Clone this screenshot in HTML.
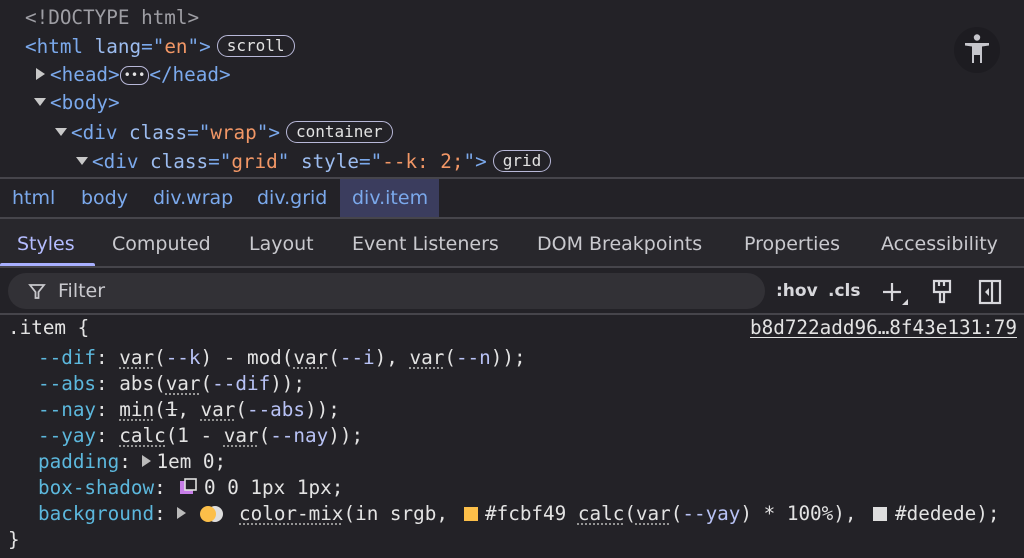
<!DOCTYPE html>
<html><head><style>
*{margin:0;padding:0;box-sizing:border-box}
body{width:1024px;height:558px;background:#232227;overflow:hidden;position:relative;font-family:"DejaVu Sans Mono","Liberation Mono",monospace;font-size:19.3px;color:#e3e3e3}
.a{position:absolute;white-space:pre;line-height:24px}
.t{color:#7ba9ec}.an{color:#9cbcef}.av{color:#f29766}.g{color:#9e9ea4}
.badge{display:inline-block;border:1.5px solid #b8b8d8;border-radius:12px;font-size:16px;line-height:20px;padding:0 9px;color:#e3e3e3;vertical-align:2px}
.ui{font-family:"DejaVu Sans","Liberation Sans",sans-serif;font-size:19px;color:#c9c9ce}
.bc{color:#7ba9ec}
.p{color:#5cb8dd}.u{text-decoration:underline dotted #999;text-underline-offset:4px}
.vr{color:#b8c2f5}
.tri{display:inline-block;width:0;height:0;border-left:9px solid #c8c8c8;border-top:6px solid transparent;border-bottom:6px solid transparent;vertical-align:1px;margin-right:5px}
.trd{display:inline-block;width:0;height:0;border-top:8px solid #c8c8c8;border-left:6px solid transparent;border-right:6px solid transparent;vertical-align:3px;margin-right:4px}
.hr{position:absolute;left:0;width:1024px;height:2px;background:#46454b}
</style></head><body>
<div class="a g" style="left:25px;top:6px">&lt;!DOCTYPE html&gt;</div>
<div class="a" style="left:25px;top:35px"><span class="t">&lt;html </span><span class="an">lang</span><span class="t">="</span><span class="av">en</span><span class="t">"&gt;</span><span class="badge" style="margin-left:6px">scroll</span></div>
<div class="a" style="left:36px;top:63px"><span class="tri"></span><span class="t">&lt;head&gt;</span><span class="badge" style="padding:0 3px;font-size:12px;line-height:17px;border-radius:9px">•••</span><span class="t">&lt;/head&gt;</span></div>
<div class="a" style="left:34px;top:91px"><span class="trd"></span><span class="t">&lt;body&gt;</span></div>
<div class="a" style="left:55px;top:121px"><span class="trd"></span><span class="t">&lt;div </span><span class="an">class</span><span class="t">="</span><span class="av">wrap</span><span class="t">"&gt;</span><span class="badge" style="margin-left:6px">container</span></div>
<div class="a" style="left:76px;top:150px"><span class="trd"></span><span class="t">&lt;div </span><span class="an">class</span><span class="t">="</span><span class="av">grid</span><span class="t">" </span><span class="an">style</span><span class="t">="</span><span class="av">--k: 2;</span><span class="t">"&gt;</span><span class="badge" style="margin-left:6px">grid</span></div>
<svg style="position:absolute;left:953px;top:26px" width="48" height="48"><circle cx="24" cy="24" r="23" fill="#1d1c21"/><circle cx="24" cy="11.5" r="3.2" fill="#c6c6cc"/><path d="M12 17 L36 17 L36 19.5 L29 20.5 L29 37 L27 37 L27 29 L21 29 L21 37 L19 37 L19 20.5 L12 19.5Z" fill="#c6c6cc"/></svg>
<div class="hr" style="top:177px"></div>
<div style="position:absolute;left:340px;top:179px;width:99px;height:39px;background:#3b3d5e"></div>
<div class="a ui bc" style="left:12px;top:186px">html</div>
<div class="a ui bc" style="left:81px;top:186px">body</div>
<div class="a ui bc" style="left:153px;top:186px">div.wrap</div>
<div class="a ui bc" style="left:257px;top:186px">div.grid</div>
<div class="a ui bc" style="left:352px;top:186px">div.item</div>
<div class="hr" style="top:217px"></div>
<div style="position:absolute;left:0;top:219px;width:1024px;height:47px;background:#28272c"></div>
<div class="a ui" style="left:17px;top:232px;color:#b4bcff">Styles</div>
<div class="a ui" style="left:112px;top:232px">Computed</div>
<div class="a ui" style="left:249px;top:232px">Layout</div>
<div class="a ui" style="left:352px;top:232px">Event Listeners</div>
<div class="a ui" style="left:537px;top:232px">DOM Breakpoints</div>
<div class="a ui" style="left:744px;top:232px">Properties</div>
<div class="a ui" style="left:881px;top:232px">Accessibility</div>
<div style="position:absolute;left:0;top:263px;width:95px;height:3px;background:#a8b0ff;border-radius:2px 2px 0 0"></div>
<div class="hr" style="top:266px"></div>
<div style="position:absolute;left:8px;top:273px;width:757px;height:36px;background:#323136;border-radius:18px"></div>
<svg style="position:absolute;left:28px;top:282px" width="18" height="18"><path d="M2 3 H16 L10.5 10 V16 H7.5 V10 Z" fill="none" stroke="#c8c8cc" stroke-width="1.8"/></svg>
<div class="a ui" style="left:58px;top:279px">Filter</div>
<div class="a ui" style="left:776px;top:279px;font-weight:bold;font-size:17px;color:#d8d8dc">:hov</div>
<div class="a ui" style="left:828px;top:279px;font-weight:bold;font-size:17px;color:#d8d8dc">.cls</div>
<svg style="position:absolute;left:880px;top:280px" width="30" height="26"><path d="M3 12 H21 M12 3 V21" stroke="#d8d8dc" stroke-width="2.2"/><path d="M28 19 L28 25 L22 25Z" fill="#d8d8dc"/></svg>
<svg style="position:absolute;left:930px;top:278px" width="26" height="28"><path d="M4 3 H20 V14 H4Z M9 3 V8 M14 3 V8 M10 14 H14 V24 H10Z" fill="none" stroke="#d8d8dc" stroke-width="2.2"/></svg>
<svg style="position:absolute;left:977px;top:278px" width="28" height="28"><rect x="3" y="3" width="20" height="22" fill="none" stroke="#d8d8dc" stroke-width="2.2"/><path d="M15 3 V25" stroke="#d8d8dc" stroke-width="2.2"/><path d="M12 10 L8 14 L12 18Z" fill="#d8d8dc"/></svg>
<div class="hr" style="top:313px"></div>
<div class="a" style="left:8px;top:316px">.item {</div>
<div class="a" style="left:750px;top:316px;text-decoration:underline;text-underline-offset:3px">b8d722add96…8f43e131:79</div>
<div class="a" style="left:38px;top:346px"><span class="p">--dif</span>: <span class="u">var</span>(<span class="vr">--k</span>) - mod(<span class="u">var</span>(<span class="vr">--i</span>), <span class="u">var</span>(<span class="vr">--n</span>));</div>
<div class="a" style="left:38px;top:372px"><span class="p">--abs</span>: abs(<span class="u">var</span>(<span class="vr">--dif</span>));</div>
<div class="a" style="left:38px;top:398px"><span class="p">--nay</span>: <span class="u">min</span>(<s>1</s>, <span class="u">var</span>(<span class="vr">--abs</span>));</div>
<div class="a" style="left:38px;top:424px"><span class="p">--yay</span>: <span class="u">calc</span>(1 - <span class="u">var</span>(<span class="vr">--nay</span>));</div>
<div class="a" style="left:38px;top:450px"><span class="p">padding</span>: <span class="tri" style="border-left-color:#bbb"></span>1em 0;</div>
<div class="a" style="left:38px;top:476px"><span class="p">box-shadow</span>: </div>
<svg style="position:absolute;left:179px;top:478px" width="22" height="18"><rect x="1" y="3" width="13" height="13" fill="#c77ee8"/><rect x="6" y="1" width="11" height="11" fill="#232227" stroke="#e0e0e0" stroke-width="1.6"/></svg>
<div class="a" style="left:204px;top:476px">0 0 1px 1px;</div>
<div class="a" style="left:38px;top:502px"><span class="p">background</span>: <span class="tri" style="border-left-color:#bbb"></span></div>
<svg style="position:absolute;left:198px;top:504px" width="28" height="20"><circle cx="17" cy="10" r="8" fill="#dedede"/><circle cx="10" cy="10" r="8" fill="#fcbf49"/></svg>
<div class="a" style="left:239px;top:502px"><span class="u">color-mix</span>(in srgb,</div>
<div style="position:absolute;left:464px;top:507px;width:14px;height:14px;background:#fcbf49"></div>
<div class="a" style="left:485px;top:502px">#fcbf49 <span class="u">calc</span>(<span class="u">var</span>(<span class="vr">--yay</span>) * 100%),</div>
<div style="position:absolute;left:873px;top:507px;width:14px;height:14px;background:#dedede"></div>
<div class="a" style="left:895px;top:502px">#dedede);</div>
<div class="a" style="left:8px;top:528px">}</div>
</body></html>
